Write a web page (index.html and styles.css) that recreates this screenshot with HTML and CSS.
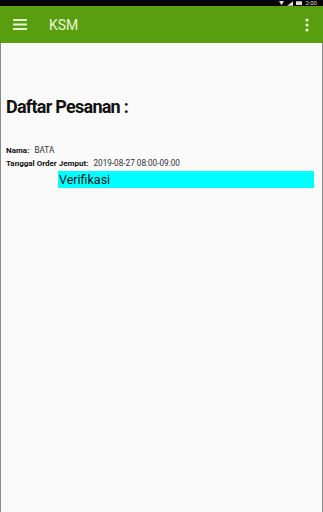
FILE: index.html
```html
<!DOCTYPE html>
<html>
<head>
<meta charset="utf-8">
<link rel="stylesheet" href="styles.css">
</head>
<body>
<div class="statusbar">
  <div class="status-icons">
    <svg width="5" height="5" viewBox="0 0 6 6"><path d="M0 0h6L3 5z" fill="#ddd"/></svg>
    <svg width="6" height="5" viewBox="0 0 8 6"><path d="M8 0v6H0z" fill="#ddd"/></svg>
    <svg width="6" height="5" viewBox="0 0 8 6"><rect x="0" y="0" width="8" height="5" fill="#ddd"/></svg>
    <span class="clock">2:00</span>
  </div>
</div>
<header class="appbar">
  <svg class="menu" width="14" height="11" viewBox="0 0 14 11"><rect x="0" y="0" width="14" height="2" fill="#e6f2d6"/><rect x="0" y="4.5" width="14" height="2" fill="#e6f2d6"/><rect x="0" y="9" width="14" height="2" fill="#e6f2d6"/></svg>
  <span class="title">KSM</span>
  <svg class="more" width="4" height="14" viewBox="0 0 4 14"><circle cx="2" cy="2" r="1.6" fill="#e6f2d6"/><circle cx="2" cy="7" r="1.6" fill="#e6f2d6"/><circle cx="2" cy="12" r="1.6" fill="#e6f2d6"/></svg>
</header>
<main class="content">
  <h1 class="heading">Daftar Pesanan :</h1>
  <div class="info">
    <div class="row"><span class="label">Nama:</span><span class="value">BATA</span></div>
    <div class="row"><span class="label">Tanggal Order Jemput:</span><span class="value">2019-08-27 08:00-09:00</span></div>
  </div>
  <div class="verify">Verifikasi</div>
</main>
</body>
</html>
```
FILE: styles.css
```css
html, body {
  margin: 0;
  padding: 0;
  height: 100%;
}
body {
  font-family: Roboto, "Liberation Sans", sans-serif;
  background: #fafafa;
  display: flex;
  flex-direction: column;
  overflow: hidden;
}
.statusbar {
  height: 6px;
  background: #050505;
  display: flex;
  justify-content: flex-end;
  align-items: center;
  overflow: hidden;
  padding-right: 6px;
}
.status-icons {
  display: flex;
  gap: 3px;
  align-items: center;
}
.clock {
  color: #ddd;
  font-size: 6px;
  line-height: 6px;
}
.appbar {
  height: 37px;
  background: #589e0f;
  display: flex;
  align-items: center;
  padding: 0 14px 0 13px;
}
.menu {
  margin-right: 22px;
}
.title {
  color: #e9f4da;
  font-size: 14px;
  flex: 1;
}
.content {
  flex: 1;
  border-left: 1.5px solid #8a8a8a;
  border-right: 1.5px solid #8a8a8a;
  padding: 52px 8px 0 5px;
}
.heading {
  margin: 0;
  font-size: 18px;
  font-weight: bold;
  color: #111;
  line-height: 24px;
  letter-spacing: -0.75px;
}
.info {
  margin-top: 26px;
  display: flex;
  flex-direction: column;
  gap: 2px;
}
.row {
  font-size: 8px;
  line-height: 11px;
  color: #333;
}
.value {
  font-size: 8.2px;
}
.label {
  font-weight: bold;
  color: #111;
  margin-right: 5px;
}
.verify {
  margin: 2px 0 0 52px;
  background: #00ffff;
  font-size: 12.5px;
  line-height: 17px;
  padding-left: 1px;
  color: #111;
}
```
